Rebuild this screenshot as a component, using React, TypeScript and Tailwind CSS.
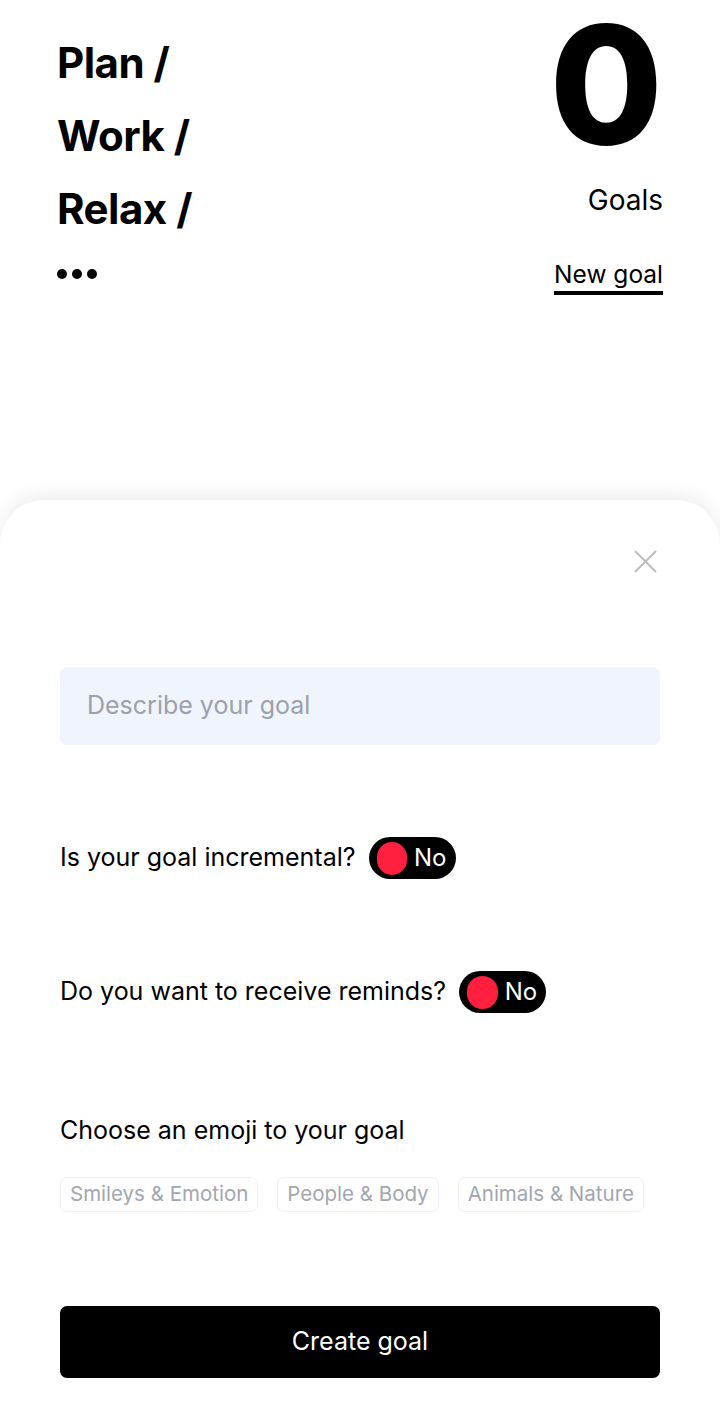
import React from 'react';

const font = { fontFamily: 'Inter, "Noto Sans", sans-serif' };

function Toggle() {
  return (
    <div className="flex h-[42px] w-[87px] items-center rounded-full bg-black pl-[8px] pr-[9px]">
      <span className="h-[33px] w-[33px] rounded-full bg-[#ff2040]" />
      <span className="ml-[7px] text-[24px] leading-none text-white">No</span>
    </div>
  );
}

export default function App() {
  return (
    <div className="flex h-[1416px] w-[720px] flex-col overflow-hidden bg-white text-black" style={font}>
      <header className="flex h-[500px] justify-between pl-[57px] pr-[57px]">
        <div className="flex flex-col pt-[26px]">
          <div className="text-[42px] font-bold leading-[73px] tracking-[-0.5px]">Plan /</div>
          <div className="text-[42px] font-bold leading-[73px] tracking-[-0.5px]">Work /</div>
          <div className="text-[42px] font-bold leading-[73px] tracking-[-0.5px]">Relax /</div>
          <div className="mt-[24px] flex gap-[5px]">
            <span className="h-[10px] w-[10px] rounded-full bg-black" />
            <span className="h-[10px] w-[10px] rounded-full bg-black" />
            <span className="h-[10px] w-[10px] rounded-full bg-black" />
          </div>
        </div>
        <div className="flex flex-col items-end pt-[3px]">
          <div className="text-[164px] font-extrabold leading-[164px]">0</div>
          <div className="mt-[17px] text-[28px] leading-[32px]">Goals</div>
          <div className="mt-[44px] border-b-4 border-black pb-[3px] text-[24.5px] leading-[28px]">New goal</div>
        </div>
      </header>

      <section className="flex flex-1 flex-col rounded-t-[44px] bg-white px-[60px] shadow-[0_-6px_18px_rgba(0,0,0,0.07)]">
        <div className="flex justify-end pt-[50px] pr-[3px]">
          <svg width="23" height="23" viewBox="0 0 24 24" fill="none" stroke="#bdbdbd" strokeWidth="2">
            <path d="M1 1L23 23M23 1L1 23" />
          </svg>
        </div>

        <div className="mt-[94px] flex h-[78px] items-center rounded-[7px] bg-[#eff4fd] px-[27px] text-[25px] text-[#9da1ab]">
          Describe your goal
        </div>

        <div className="mt-[92px] flex items-center gap-[13px]">
          <span className="text-[25px]">Is your goal incremental?</span>
          <Toggle />
        </div>

        <div className="mt-[92px] flex items-center gap-[13px]">
          <span className="text-[25px]">Do you want to receive reminds?</span>
          <Toggle />
        </div>

        <div className="mt-[102px] text-[25px] leading-[30px]">Choose an emoji to your goal</div>

        <div className="mt-[32px] flex gap-[19px]">
          {['Smileys & Emotion', 'People & Body', 'Animals & Nature'].map((t) => (
            <span
              key={t}
              className="flex h-[35px] items-center rounded-[7px] border border-[#edf1fb] px-[9px] text-[20.5px] text-[#a2a6b0]"
            >
              {t}
            </span>
          ))}
        </div>

        <button className="mt-[94px] flex h-[72px] items-center justify-center rounded-[7px] bg-black text-[25px] text-white">
          Create goal
        </button>
      </section>
    </div>
  );
}
